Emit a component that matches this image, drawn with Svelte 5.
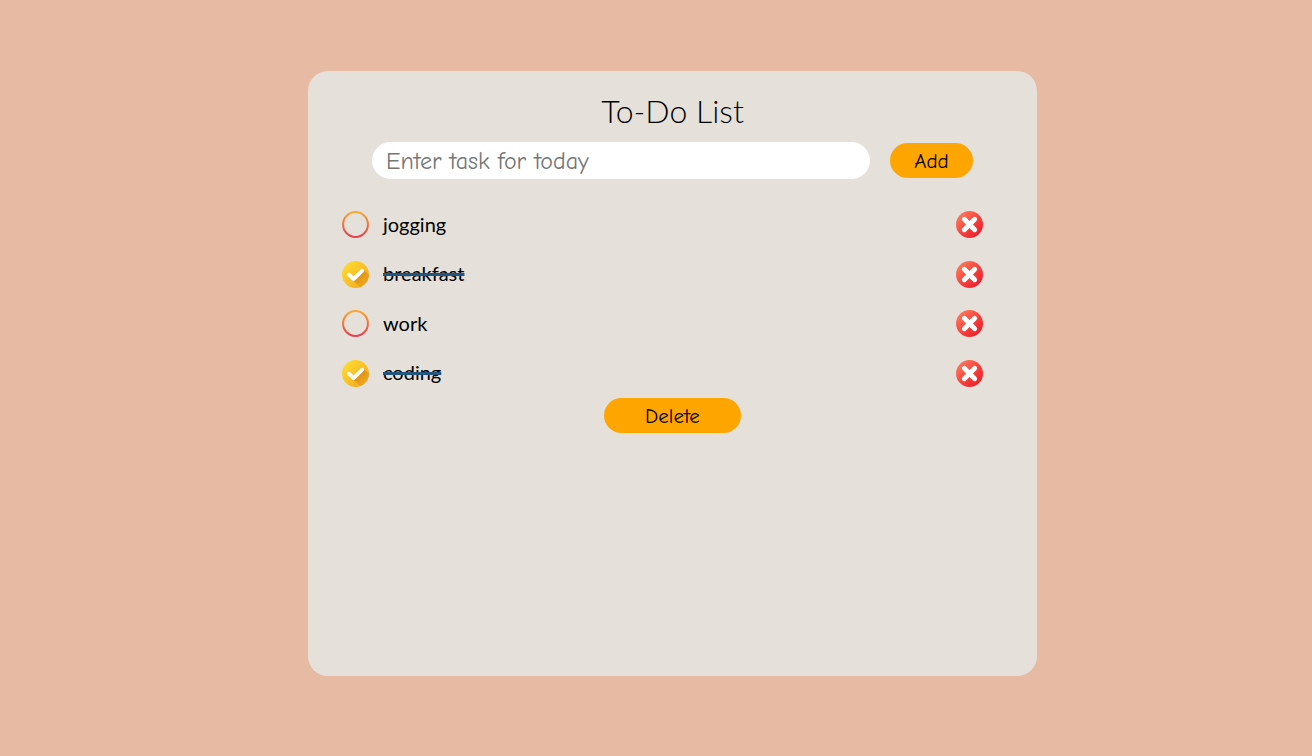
<script>
  let draft = $state('');
  let tasks = $state([
    { text: 'jogging', done: false },
    { text: 'breakfast', done: true },
    { text: 'work', done: false },
    { text: 'coding', done: true }
  ]);
  function add(event) {
    event.preventDefault();
    if (draft.trim()) tasks.push({ text: draft.trim(), done: false });
    draft = '';
  }
  function remove(task) {
    tasks = tasks.filter((t) => t !== task);
  }
</script>

<main>
  <section>
    <h1>To-Do List</h1>
    <form onsubmit={add}>
      <input class="entry" type="text" aria-label="Task" placeholder="Enter task for today" bind:value={draft} />
      <button class="pill add" type="submit">Add</button>
    </form>
    <ul>
      {#each tasks as task, i}
        <li>
          <label>
            <input type="checkbox" bind:checked={task.done} />
            <svg class="mark" viewBox="0 0 28 28" aria-hidden="true">
              <defs>
                <linearGradient id="ring{i}" x1="0" y1="0" x2="0" y2="1">
                  <stop offset="0" stop-color="#fba72f" />
                  <stop offset="1" stop-color="#e5404f" />
                </linearGradient>
                <linearGradient id="gold{i}" x1="0" y1="0" x2="1" y2="1">
                  <stop offset="0.1" stop-color="#fddc30" />
                  <stop offset="0.9" stop-color="#f5a81d" />
                </linearGradient>
                <linearGradient id="shade{i}" x1="0.3" y1="0.3" x2="0.8" y2="0.8">
                  <stop offset="0" stop-color="#d98a12" stop-opacity="0.85" />
                  <stop offset="1" stop-color="#d98a12" stop-opacity="0" />
                </linearGradient>
                <clipPath id="disc{i}"><circle cx="14" cy="14" r="14" /></clipPath>
              </defs>
              {#if task.done}
                <circle cx="14" cy="14" r="14" fill="url(#gold{i})" />
                <path d="M22.5 9 L32 18.5 L22 30 L10.5 19.5 Z" fill="url(#shade{i})" clip-path="url(#disc{i})" />
                <path d="M7.2 14.2 L12 18.8 L21 10" fill="none" stroke="#fff" stroke-width="3.9" stroke-linecap="round" stroke-linejoin="round" />
              {:else}
                <circle cx="14" cy="14" r="12.9" fill="none" stroke="url(#ring{i})" stroke-width="2.1" />
              {/if}
            </svg>
            <span class:done={task.done}>{task.text}</span>
          </label>
          <button class="remove" type="button" aria-label="Remove {task.text}" onclick={() => remove(task)}>
            <svg viewBox="0 0 28 28" aria-hidden="true">
              <defs>
                <linearGradient id="red{i}" x1="0" y1="0" x2="1" y2="1">
                  <stop offset="0.1" stop-color="#ff7a5c" />
                  <stop offset="0.55" stop-color="#f5403c" />
                  <stop offset="0.9" stop-color="#ee1c2a" />
                </linearGradient>
              </defs>
              <circle cx="14" cy="14" r="14" fill="url(#red{i})" />
              <path d="M8.6 8.6 L19.4 19.4 M19.4 8.6 L8.6 19.4" stroke="#fff" stroke-width="5" stroke-linecap="round" />
            </svg>
          </button>
        </li>
      {/each}
    </ul>
    <button class="pill clear" type="button" onclick={() => (tasks = [])}>Delete</button>
  </section>
</main>

<style>
  :global(body) {
    background: #e7baa4;
  }
  main,
  main * {
    box-sizing: border-box;
  }
  main {
    padding: 71px 20px 80px 53px;
    display: flex;
    justify-content: center;
    font-family: Lato, 'Open Sans', sans-serif;
    color: #000;
  }
  section {
    width: 100%;
    max-width: 729px;
    min-height: 80vh;
    padding: 20px 34px;
    border-radius: 20px;
    background: #e5e0da;
    display: flex;
    flex-direction: column;
    align-items: center;
  }
  h1 {
    margin: 0;
    font-size: 32px;
    font-weight: 300;
    line-height: 40px;
  }
  form {
    align-self: stretch;
    margin: 11px 30px 21px;
    display: flex;
    align-items: center;
    gap: 20px;
  }
  .entry,
  .pill {
    font-family: 'Comic Neue', 'Comic Sans MS', 'Open Sans', sans-serif;
  }
  .entry {
    flex: 1;
    min-width: 0;
    height: 37px;
    padding: 0 14px;
    border: 0;
    border-radius: 20px;
    background: #fff;
    color: #000;
    font-size: 24px;
  }
  .entry::placeholder {
    color: #757575;
  }
  .pill {
    height: 35px;
    padding: 0;
    border: 0;
    border-radius: 20px;
    background: orange;
    color: #000;
    font-size: 21px;
    cursor: pointer;
  }
  .add {
    width: 83px;
  }
  .clear {
    width: 137px;
  }
  ul {
    align-self: stretch;
    min-height: 198px;
    margin: 0;
    padding: 0 20px 0 0;
    display: grid;
    grid-auto-rows: 1fr;
    list-style: none;
  }
  li {
    display: flex;
    align-items: center;
    justify-content: space-between;
  }
  label {
    display: flex;
    align-items: center;
    gap: 14px;
    font-size: 20px;
    cursor: pointer;
  }
  label span {
    padding-bottom: 2px;
  }
  label input {
    position: absolute;
    opacity: 0;
  }
  svg {
    display: block;
    width: 27px;
    height: 27px;
  }
  .done {
    text-decoration: line-through 3px #22567f;
  }
  .remove {
    padding: 0;
    border: 0;
    background: none;
    cursor: pointer;
  }
</style>
